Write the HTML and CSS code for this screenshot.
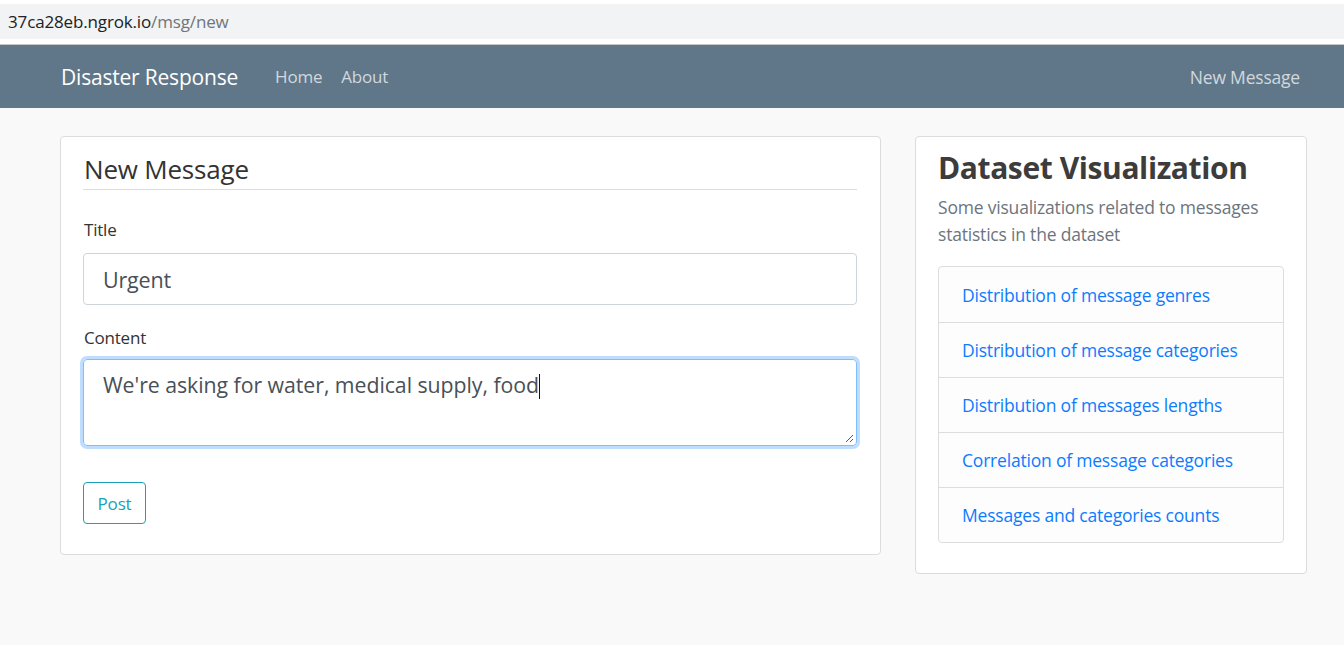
FILE: index.html
```html
<!DOCTYPE html>
<html lang="en">
<head>
<meta charset="utf-8">
<title>Disaster Response</title>
<link rel="stylesheet" href="styles.css">
</head>
<body>
<div class="urlbar">
  <div class="url"><span class="host">37ca28eb.ngrok.io</span><span class="path">/msg/new</span></div>
</div>
<nav class="navbar">
  <div class="nav-left">
    <a class="brand" href="#">Disaster Response</a>
    <a class="nav-link" href="#">Home</a>
    <a class="nav-link" href="#">About</a>
  </div>
  <a class="nav-link" href="#">New Message</a>
</nav>
<main class="content">
  <section class="card form-card">
    <h2 class="form-title">New Message</h2>
    <form class="form">
      <label class="label" for="title">Title</label>
      <input class="input" id="title" type="text" value="Urgent">
      <label class="label label-content" for="content">Content</label>
      <div class="textarea"><span>We're asking for water, medical supply, food</span><span class="caret"></span>
        <svg class="grip" width="9" height="9" viewBox="0 0 9 9"><path d="M8 1L1 8M8 5L5 8" stroke="#555" stroke-width="1" fill="none"/></svg>
      </div>
      <button class="btn" type="button">Post</button>
    </form>
  </section>
  <aside class="card viz-card">
    <h1 class="viz-title">Dataset Visualization</h1>
    <p class="viz-sub">Some visualizations related to messages statistics in the dataset</p>
    <ul class="list">
      <li class="list-item"><a href="#">Distribution of message genres</a></li>
      <li class="list-item"><a href="#">Distribution of message categories</a></li>
      <li class="list-item"><a href="#">Distribution of messages lengths</a></li>
      <li class="list-item"><a href="#">Correlation of message categories</a></li>
      <li class="list-item"><a href="#">Messages and categories counts</a></li>
    </ul>
  </aside>
</main>
</body>
</html>
```
FILE: styles.css
```css
* { box-sizing: border-box; }
html, body { margin: 0; padding: 0; }
body {
  font-family: "Open Sans", "Noto Sans", sans-serif;
  background: #f9f9f9;
  color: #212529;
  height: 645px;
  overflow: hidden;
}
a { text-decoration: none; }

.urlbar {
  background: #fff;
  padding-top: 4px;
  height: 45px;
  border-bottom: 1px solid #c8c8c8;
}
.url {
  background: #f1f3f4;
  height: 35px;
  padding-left: 8px;
  display: flex;
  align-items: center;
  font-size: 17px;
  letter-spacing: -0.15px;
}
.host { color: #202124; }
.path { color: #70757a; }

.navbar {
  background: #5f7789;
  height: 63px;
  display: flex;
  align-items: center;
  justify-content: space-between;
  padding: 0 44px 0 61px;
}
.nav-left { display: flex; align-items: center; }
.brand {
  color: #fff;
  font-size: 21px;
  margin-right: 37px;
  letter-spacing: -0.2px;
}
.nav-link {
  color: rgba(255,255,255,0.72);
  font-size: 17px;
  margin-right: 19px;
  letter-spacing: -0.2px;
}
.navbar > .nav-link { margin-right: 0; font-size: 17.5px; }

.content {
  display: flex;
  align-items: flex-start;
  gap: 34px;
  padding: 28px 37px 0 60px;
}
.card {
  background: #fff;
  border: 1px solid #dcdcdc;
  border-radius: 4px;
}
.form-card {
  width: 821px;
  height: 419px;
  padding: 14px 23px 0 22px;
}
.form-title {
  margin: 0;
  font-weight: 400;
  font-size: 26px;
  color: #333;
  line-height: 37px;
  padding-left: 1px;
  padding-bottom: 1px;
  border-bottom: 1px solid #ddd;
  letter-spacing: -0.2px;
}
.form { display: flex; flex-direction: column; align-items: flex-start; }
.label {
  font-size: 17px;
  color: #333;
  margin-top: 27px;
  line-height: 26px;
  padding-left: 1px;
  letter-spacing: -0.2px;
}
.label-content { margin-top: 20px; }
.input {
  margin-top: 10px;
  width: 774px;
  height: 52px;
  border: 1px solid #ced4da;
  border-radius: 4px;
  padding: 0 19px;
  font-family: inherit;
  font-size: 21.5px;
  color: #495057;
  letter-spacing: -0.2px;
}
.textarea {
  position: relative;
  margin-top: 8px;
  width: 774px;
  height: 87px;
  border: 1px solid #80bdff;
  border-radius: 4px;
  box-shadow: 0 0 0 3px rgba(0,123,255,0.25);
  padding: 10px 19px;
  font-size: 21.3px;
  line-height: 30px;
  color: #495057;
  letter-spacing: -0.05px;
}
.caret {
  display: inline-block;
  width: 1px;
  height: 25px;
  background: #111;
  vertical-align: -6px;
}
.grip { position: absolute; right: 2px; bottom: 2px; }
.btn {
  margin-top: 36px;
  width: 63px;
  height: 42px;
  border: 1px solid #17a2b8;
  border-radius: 4px;
  background: #fff;
  color: #17a2b8;
  font-family: inherit;
  font-size: 17px;
  padding: 0;
  letter-spacing: -0.2px;
}

.viz-card {
  width: 393px;
  height: 438px;
  padding: 10px 22px 0 22px;
}
.viz-title {
  margin: 0;
  font-size: 30px;
  font-weight: 700;
  color: #3c3c3c;
  line-height: 42px;
  letter-spacing: -0.4px;
}
.viz-sub {
  margin: 5px 0 0;
  font-size: 17.5px;
  line-height: 27px;
  color: #6c757d;
  letter-spacing: -0.2px;
}
.list {
  list-style: none;
  margin: 18px 0 0;
  padding: 0;
  border: 1px solid #ddd;
  border-radius: 4px;
  background: #fdfdfd;
}
.list-item {
  height: 55px;
  display: flex;
  align-items: center;
  padding: 0 23px;
  border-top: 1px solid #ddd;
  font-size: 17.5px;
  letter-spacing: -0.2px;
}
.list-item:first-child { border-top: 0; }
.list-item a { color: #0d7bff; }
```
